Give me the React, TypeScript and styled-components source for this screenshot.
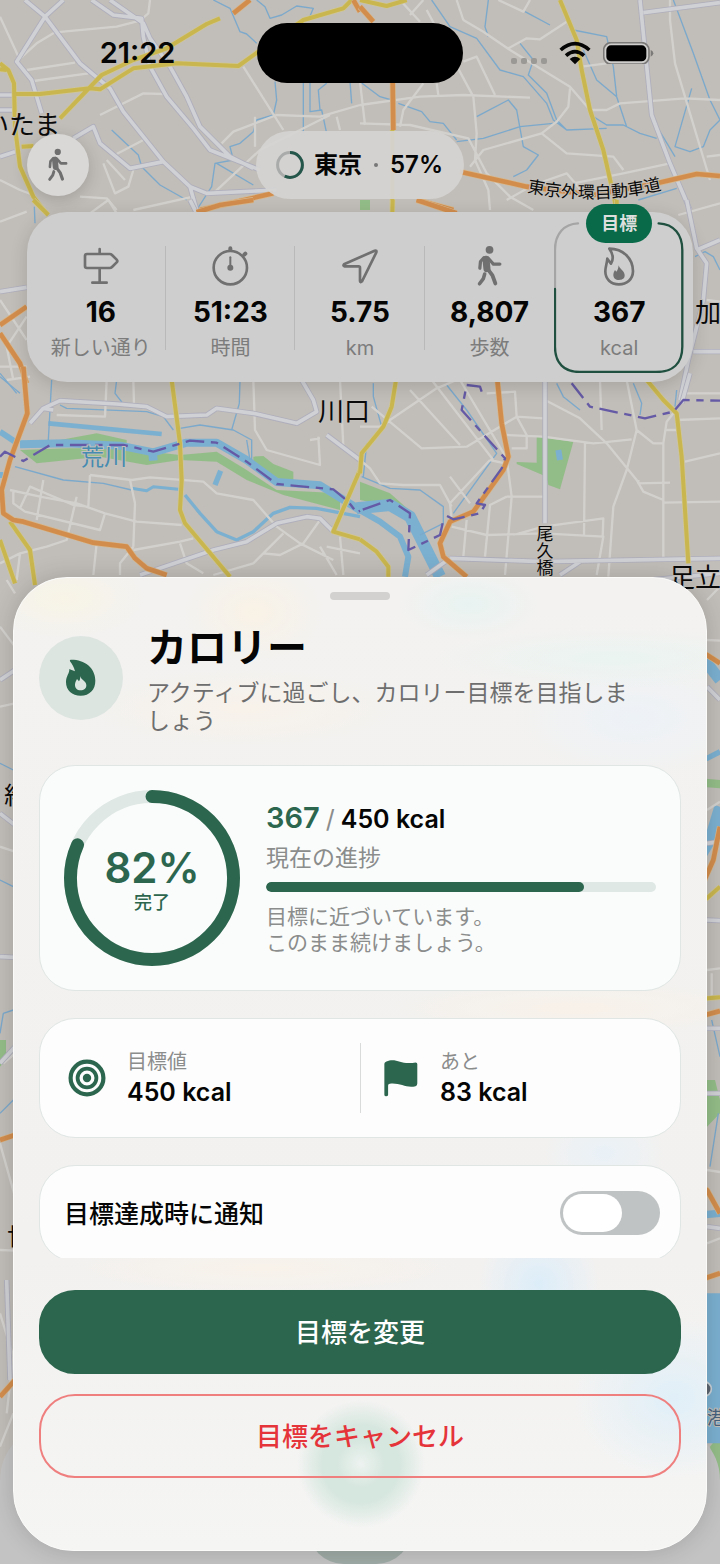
import React from 'react'
import styled, { createGlobalStyle } from 'styled-components'

const GREEN = '#2c664e'
const MUTED = '#8b8c8c'

const GlobalStyle = createGlobalStyle`
  * {
    box-sizing: border-box;
  }
  body {
    margin: 0;
    background: #c2beb9;
    font-family: Inter, 'Noto Sans CJK JP', sans-serif;
    color: #050505;
  }
  button {
    font: inherit;
    cursor: pointer;
  }
  h1, h2, p, dl, dd, dt {
    margin: 0;
  }
`

/* ---------- map ---------- */

interface Tile {
  x: number
  y: number
  parks?: string
  rivers?: [string, number][]
  streams?: string
  streets?: string
  avenues?: string
  yellow?: string
  orange?: string
  border?: string
}

const tiles: Tile[] = [
  {
    x: 0,
    y: 0,
    streams:
      'M640 0L690 25L720 95L740 102L770 130M770 0L795 20L810 55L845 45L890 18L940 25L925 60M825 245L830 300L820 345L770 360L760 395L720 430L690 440L700 480L645 490L635 560L590 630M335 390L415 465L425 500L480 555L560 600M910 245L910 400M930 245L930 335L965 330L980 400M980 250L955 270L960 330M1050 245L1055 310M650 490L760 555',
    streets:
      'M0 50L60 180M50 185L110 130L165 97L350 80L420 62L445 40L450 0M80 210L225 188M100 243L265 220M300 345L430 280L490 282M350 462L440 415M730 200L850 390M0 540L60 570L100 585M665 430L700 395L830 345L960 350L1080 315M640 580L780 450L990 345M310 490L345 580L385 560L400 510M320 480L375 540M240 590L320 595L350 630M400 630L580 590M1010 350L1020 390M765 350L765 440',
    avenues:
      'M75 0L135 50L240 190L330 265L370 335L490 485L570 560L590 630M190 0L135 50L50 185L95 240L125 340M275 0L340 45L425 55L430 110L450 200L500 290L580 385L630 450L780 510M330 0L430 70L450 115L510 200L560 290L600 380L690 470L760 505M220 415L280 380L300 430L390 505L490 485M570 560L620 580L830 570M0 470L45 455M0 285L40 285M0 330L40 330',
    yellow:
      'M0 190L25 210L42 250L45 380L60 500L100 590L130 630M0 208L20 210M45 282L120 282L270 265L300 268L400 205L530 190L715 198L775 155L910 60L1030 25L1055 0M180 355L305 225L400 180L500 145L620 72L660 55M65 440L100 438',
    orange: 'M700 40L750 0M600 630L820 580M1060 0L1080 35',
  },
  {
    x: 1080,
    y: 0,
    streams:
      'M215 0L270 80L350 115L420 210L490 230L560 310L580 360L620 390L740 385M385 0L375 80L385 110M350 350L445 300L470 330L490 440L535 465L500 510L460 530M580 370L480 380L370 415L290 425M115 310L185 335L210 365L250 370L290 420M480 130L520 180L505 225L560 280L590 360L620 390M640 90L740 110L760 200L770 290L800 380M940 0L1000 160L1050 300L1080 360M700 350L740 375L790 375L840 400L890 415M995 265L945 440L990 455L1030 440L1050 390L1080 360M495 35L570 75M670 150L710 240L770 290M835 600L950 565M870 345L945 470M0 245L60 290L95 300',
    streets:
      'M415 0L490 35L510 0M290 0L310 60L370 95L450 150L630 260L690 330L740 330L780 310L975 295L1080 300M445 145L500 115L540 118L620 65M665 200L740 190M120 0L180 65M190 0L150 45M200 30L340 290L350 400L345 480L385 570L390 630M310 185L350 170L405 285M0 315L180 290L310 285L510 293M630 265L625 320L590 365L545 400L370 450L330 500M545 400L620 460L760 470L790 510M640 550L790 520L930 490M930 0L930 60L945 190L1050 540M120 380L130 330L190 250M0 370L150 375L325 415L380 520L450 590L520 630M0 245L15 375M230 250L235 285M440 600L520 555L620 520L680 590M1040 470L1080 465',
    avenues:
      'M840 0L850 100L875 345L930 490L990 630M850 38L1080 8',
    yellow:
      'M600 0L650 120L665 210L690 330L730 450L755 560L770 630M0 0L80 18L140 0M97 390L97 630',
    orange:
      'M0 20L40 65M98 248L100 390M300 515L500 560L700 585L890 550L1010 522L1080 528M170 600L280 630',
    parks: 'M0 600L30 600L30 630L0 630Z',
  },
  {
    x: 0,
    y: 600,
    streams: 'M0 530L60 580M103 20L105 70',
    streets:
      'M0 65L80 35M0 300L80 420M0 500L80 500M80 350L20 440L40 540M20 540L90 530M270 40L325 0L350 40',
    avenues: 'M0 275L80 262M570 0L590 40',
    yellow: 'M100 0L145 45',
    orange: 'M80 320L0 375M0 400L60 490L80 550M590 37L660 15L760 0',
  },
  {
    x: 1080,
    y: 600,
    streams: 'M1005 170L1035 155L1060 170L1080 210',
    streets: 'M955 45L1080 10M1040 300L1080 305',
    avenues:
      'M980 0L1010 145L1040 190L1030 300L985 480L960 600M1010 150L1080 120M1000 455L1080 455',
    orange: 'M170 0L290 40',
    yellow: 'M98 0L97 40M770 0L770 40',
  },
  {
    x: 0,
    y: 1140,
    parks:
      'M60 210L200 205L360 205L540 225L650 215L740 270L830 330L1020 340L1020 390L850 345L740 300L650 245L540 240L440 255L300 230L110 250ZM180 180L290 160L380 180L380 195ZM760 230L790 228L820 252L880 275L880 310L820 290L760 250Z',
    rivers: [
      ['M60 193L200 190L360 197L460 217L560 188L650 188L740 240L830 306L960 316L1080 390', 24],
      ['M145 130L485 162', 14],
      ['M0 155L50 188', 18],
      ['M555 345L600 400L650 455L710 480L760 455L820 400L870 382L950 385L1080 410', 10],
      ['M395 325L440 332L460 320L535 328', 9],
      ['M645 315L662 272', 16],
      ['M0 285L10 285', 18],
      ['M458 220L460 242', 26],
    ],
    streams:
      'M155 0L145 180M350 0L345 40L370 72M720 0L718 70L695 150M45 260L190 300L310 310L395 330M540 145L600 135L700 150L755 180L755 240M180 75L200 85L440 95L490 110L520 150M0 -20L50 40M740 180L750 240',
    streets:
      'M320 0L315 110L170 105M400 0L402 72M270 285L265 380L220 375L90 320L60 385M390 300L405 370L400 500M270 285L395 300L450 292L610 305L650 340L760 360L830 440L900 490L1000 540M30 330L120 350L230 370L315 400L410 425L545 435M400 510L540 485L580 475M540 490L560 550L610 580M290 490L280 585M0 550L60 520L140 500L200 480L230 350M40 335L40 370L75 395L300 450L315 400M760 0L765 150L800 210L960 255L955 170M610 110L540 110M1020 0L1030 200M790 520L840 525L910 490L960 420M640 585L760 550L850 460M60 520L50 600M960 500L1010 585M130 300L110 420M980 500L1080 520M1020 470L1030 585M930 180L960 175M400 500L360 550L360 585',
    avenues:
      'M90 130L130 85L180 62L350 72L440 80L500 110L620 105L650 85L760 100L890 130L950 95L940 60L905 0M420 585L640 510L740 485L830 430L920 410L960 415L1000 455M980 165L1080 240M130 85L160 90',
    yellow:
      'M515 0L540 190L545 300L540 390L555 430L690 590M30 425L90 510L105 615M1080 270L1000 455L1080 478',
    orange: 'M70 -40L82 100L30 240L5 330L10 400L40 420L70 425L280 488L380 500L405 535L440 565L500 585',
    border: 'M0 230L15 215L70 243L150 195L370 195L460 215L570 182L650 188L740 245L830 312L1000 328L1045 365L1070 398L1080 392',
  },
  {
    x: 1080,
    y: 1140,
    parks:
      'M0 305L90 340L170 410L100 380L0 360ZM530 170L640 185L600 328L565 315L560 290L470 252L470 246L530 248Z',
    rivers: [
      ['M-10 385L90 375L150 410L190 490L240 590', 36],
      ['M-10 385L60 425L120 470L145 530L135 590', 18],
      ['M595 210L600 240', 18],
    ],
    streams:
      'M260 15L320 90L410 220L280 400M5 290L90 325L180 330L250 380L250 430L180 465M40 10L40 50L65 140M20 190L10 290M820 10L845 70L840 105M590 10L610 50L660 90M950 30L945 80',
    streets:
      'M150 30L300 195M215 0L400 240M35 80L185 205L320 200L470 110L550 115M60 140L230 25L290 0M0 140L60 140M380 40L465 35L470 110L500 165L500 205L455 205M440 165L550 170L700 190L815 178M555 60L660 115L740 190L830 300L850 335L910 360M675 190L672 465M830 150L800 270L760 380L745 590M800 0L830 150L880 190L910 190L910 545M975 245L1080 220M910 368L1080 365M835 300L835 310L930 308M440 350L550 350M440 235L455 350L435 585M440 350L390 375L375 530M275 440L380 465L550 460L730 470L710 585M460 465L550 440L730 415L728 470M320 420L310 530M390 240L270 370L275 420M390 240L435 250M0 240L30 265L60 310L130 315L240 315L275 380M270 290L330 370M720 0L725 150M950 120L1080 115M980 40L1080 40M915 150L950 150M910 190L920 125L940 100M300 0L440 235',
    avenues:
      'M555 0L555 430M270 535L550 545L1080 535M990 -20L965 70M200 585L270 535M600 585L660 545M870 600L1080 580',
    yellow:
      'M108 0L95 80L70 140L5 220L0 280M0 478L50 515L85 560L85 590M860 0L910 60L950 100L965 230L985 550',
    orange: 'M412 0L425 130L445 230L430 270L340 395L270 425L240 490L250 530L320 590',
    border:
      'M365 35L360 20L320 15L305 90L435 235L425 265L350 370L375 375L360 400L280 418L255 405M248 430L240 465L145 510L150 400L90 360L0 392M635 10L690 80L855 115L940 95L970 60L1080 62',
  },
  {
    x: 0,
    y: 1740,
    parks: 'M0 1380L18 1380L18 1440L0 1460ZM2100 595L2160 600L2160 625L2100 620ZM2100 1500L2145 1500L2160 1560L2160 1600L2121 1640ZM2130 2600L2160 2560L2160 2760Z',
    rivers: [
      ['M2100 225L2121 250L2160 300', 34],
      ['M2050 560L2121 535L2160 515', 16],
      ['M2060 900L2130 780L2160 680', 34],
      ['M2100 1905L2160 1900', 22],
      ['M2142 2140L2142 2590', 80],
    ],
    streams: 'M0 550L40 570M0 900L40 920M2135 1320L2160 1430M2155 1600L2130 1760M40 1290L10 1300L0 1360M0 1600L40 1560',
    streets:
      'M0 140L45 200M0 380L45 370M0 800L45 815M20 0L45 40M10 1450L45 1420M0 1690L45 1850M0 2010L45 2012M0 2200L40 2330L20 2500M2121 60L2160 20M2121 180L2160 182M2121 690L2160 665M2121 1170L2160 1165M2135 1180L2135 1250M2121 1770L2160 1776M0 2600L40 2500M2121 1990L2160 1975',
    avenues:
      'M0 300L45 270M0 700L45 735M0 1130L45 1132M0 1450L45 1400M2121 320L2160 360M2121 790L2160 785M2121 1020L2160 1022M2121 1345L2160 1345M2121 1540L2160 1540M2121 1940L2160 1945M20 2100L30 2400',
    yellow: 'M0 -120L45 10M2060 970L2121 955L2160 920M2060 1260L2160 1252',
    orange: 'M0 1680L45 1665M2060 200L2121 225L2160 250M2060 1320L2160 1293M2100 930L2140 840L2160 740M2060 1800L2121 1830L2160 1900M2100 2100L2160 2080M0 2450L45 2400',
  },
]

const MapSvg = styled.svg`
  position: absolute;
  inset: 0;
  width: 100%;
  height: 100%;
  font-family: 'Noto Sans CJK JP', sans-serif;
`

interface MapLabel {
  text: string
  x: number
  y: number
  size: number
  color?: string
  vertical?: boolean
}

const labels: MapLabel[] = [
  { text: 'いたま', x: -17, y: 134, size: 26 },
  { text: '川口', x: 318, y: 421, size: 26 },
  { text: '荒川', x: 81, y: 465, size: 23, color: '#468bb0' },
  { text: '加', x: 695, y: 322, size: 26 },
  { text: '足立', x: 669, y: 587, size: 26 },
  { text: '尾久橋', x: 545, y: 525, size: 17, vertical: true },
  { text: '紅', x: 4, y: 804, size: 24 },
  { text: '世', x: 7, y: 1245, size: 24 },
  { text: '港', x: 707, y: 1424, size: 18, color: '#47627e' },
]

const CityMap = () => (
  <MapSvg viewBox="0 0 2160 4692" preserveAspectRatio="xMidYMin slice" aria-hidden="true">
    <rect width="2160" height="4692" fill="#c1bdb8" />
    {tiles.map((t, i) => (
      <g
        key={i}
        transform={`translate(${t.x} ${t.y})`}
        fill="none"
        strokeLinejoin="round"
      >
        <path d={t.parks} fill="#93bd88" />
        {t.rivers?.map(([d, w]) => (
          <path key={d} d={d} stroke="#7bb0d0" strokeWidth={w} />
        ))}
        <path d={t.streams} stroke="#7ba9cc" strokeWidth="4" />
        <path d={t.streets} stroke="#d3d1ce" strokeWidth="7" />
        <path d={t.avenues} stroke="#aeaebc" strokeWidth="16" />
        <path d={t.avenues} stroke="#d0d1d5" strokeWidth="11" />
      </g>
    ))}
    {tiles.map((t, i) => (
      <g
        key={i}
        transform={`translate(${t.x} ${t.y})`}
        fill="none"
        strokeLinejoin="round"
      >
        <path d={t.yellow} stroke="#d0c795" strokeWidth="16" />
        <path d={t.yellow} stroke="#c9b64f" strokeWidth="12" />
        <path d={t.orange} stroke="#d6b88e" strokeWidth="18" />
        <path d={t.orange} stroke="#d28d4d" strokeWidth="14" />
        <path d={t.border} stroke="#655aa5" strokeWidth="7" strokeDasharray="56 20 22 20" />
      </g>
    ))}
    <circle cx="2112" cy="4167" r="22" fill="#5c6570" stroke="#c9d2d8" strokeWidth="5" />
    <g transform="scale(3)" fill="#0a0a0a" stroke="#c4c0bb" strokeWidth="2" paintOrder="stroke">
      {labels.map((l) => (
        <text
          key={l.text}
          x={l.x}
          y={l.y}
          fontSize={l.size}
          fill={l.color}
          writingMode={l.vertical ? 'vertical-rl' : undefined}
        >
          {l.text}
        </text>
      ))}
      <path id="ringRoad" d="M527 192Q598 206 664 189" fill="none" stroke="none" />
      <text fontSize="17">
        <textPath href="#ringRoad">東京外環自動車道</textPath>
      </text>
    </g>
  </MapSvg>
)

/* ---------- icons ---------- */

const WalkIcon = ({ height = 42 }: { height?: number }) => (
  <svg height={height} viewBox="345 134 90 130" fill="none" stroke="currentColor" strokeLinecap="round" strokeLinejoin="round">
    <circle cx="390" cy="149" r="12" fill="currentColor" stroke="none" />
    <path d="M379 178L382 207" strokeWidth="22" />
    <path d="M386 175L402 193L422 193" strokeWidth="10" />
    <path d="M373 173L362 185L360 206" strokeWidth="10" />
    <path d="M384 208L399 228L408 253" strokeWidth="12" />
    <path d="M375 224L371 238L359 254" strokeWidth="11" />
  </svg>
)

const SignIcon = () => (
  <svg height={40} viewBox="245 140 114 120" fill="none" stroke="currentColor" strokeWidth="8" strokeLinecap="round" strokeLinejoin="round">
    <path d="M298 149V162M298 208V248M276 250H319" />
    <path d="M260 164H328Q332 164 335 167L349 181Q353 185 349 189L335 203Q332 206 328 206H260Q254 206 254 200V170Q254 164 260 164Z" />
  </svg>
)

const StopwatchIcon = () => (
  <svg height={42} viewBox="632 131 116 126" fill="none" stroke="currentColor" strokeLinecap="round">
    <circle cx="690" cy="199" r="50" strokeWidth="8" />
    <path d="M690 141V146M732 160L735 157" strokeWidth="12" />
    <path d="M690 168V199" strokeWidth="6" />
    <circle cx="690" cy="199" r="9" fill="currentColor" stroke="none" />
  </svg>
)

const ArrowIcon = () => (
  <svg height={36} viewBox="0 0 114 108" fill="none" stroke="currentColor" strokeWidth="8" strokeLinejoin="round">
    <path d="M101 8L9 49Q5 54 11 55H53Q57 55 57 59V99Q58 105 63 100L106 13Q108 6 101 8Z" />
  </svg>
)

const FlameIcon = () => (
  <svg height={42} viewBox="729 131 96 126" fill="none" stroke="currentColor" strokeWidth="8" strokeLinejoin="round">
    <path d="M748 142C790 142 819 172 819 210C818 235 800 249 777 249C752 249 736 233 736 210C736 196 741 187 742 172L753 187C762 172 758 156 748 142Z" />
    <path
      d="M776 192C778 203 794 208 794 222C794 232 787 236 777 236C767 236 760 230 760 221C760 214 763 210 765 206L769 211C774 206 775 199 776 192Z"
      fill="currentColor"
      stroke="none"
    />
  </svg>
)

const FlameSolidIcon = () => (
  <svg height={40} viewBox="192 194 100 120" fill="currentColor" fillRule="evenodd">
    <path d="M212 199C209 199 209 202 211 205C216 212 222 220 225 234C220 232 215 230 208 227C209 240 198 248 198 266C198 291 216 307 242 307C269 307 286 289 286 262C286 222 252 198 212 199ZM240 248C243 260 259 262 259 276C259 286 252 291 242 291C231 291 225 284 225 274C225 267 229 262 231 257L237 264C241 259 241 253 240 248Z" />
  </svg>
)

const TargetIcon = () => (
  <svg width={38} viewBox="0 0 38 38" fill="none" stroke="currentColor">
    <circle cx="19" cy="19" r="16.4" strokeWidth="4.2" />
    <circle cx="19" cy="19" r="9.4" strokeWidth="3.8" />
    <circle cx="19" cy="19" r="4.2" fill="currentColor" stroke="none" />
  </svg>
)

const FlagIcon = () => (
  <svg width={36} viewBox="70 178 106 114" fill="currentColor">
    <path d="M74 192Q74 187 80 185C105 175 120 190 145 190Q158 190 166 188Q171 188 171 193V250Q171 256 166 258C140 266 120 247 90 251Q85 252 85 256V283Q85 288 79 288Q74 288 74 283Z" />
  </svg>
)

const WifiIcon = () => (
  <svg width={32} viewBox="0 0 96 72" fill="none" stroke="currentColor" strokeWidth="11">
    <path d="M5 27Q48 -11 91 27" />
    <path d="M21 44Q48 20 75 44" />
    <path d="M32 54Q48 41 64 54L48 70Z" fill="currentColor" stroke="none" />
  </svg>
)

const BatteryIcon = () => (
  <svg width={51} viewBox="0 0 153 68" fill="none">
    <rect x="2" y="2" width="136" height="64" rx="22" fill="#cfcecc" stroke="#7c7a78" strokeWidth="5" />
    <rect x="10" y="10" width="120" height="48" rx="14" fill="#000" />
    <path d="M143 24Q151 26 151 34Q151 42 143 44Z" fill="#7c7a78" />
  </svg>
)

/* ---------- top of the screen ---------- */

const Screen = styled.main`
  position: relative;
  display: flex;
  flex-direction: column;
  min-height: 100vh;
  overflow: hidden;
`

const TopRow = styled.div`
  position: relative;
  display: grid;
  grid-template-columns: 1fr auto 1fr;
  align-items: center;
`

const StatusBar = styled(TopRow)`
  padding: 23px 18px 0;
  justify-items: center;
`

const Clock = styled.time`
  font-size: 29px;
  font-weight: 600;
  line-height: 36px;
`

const Island = styled.div`
  width: 206px;
  height: 60px;
  border-radius: 30px;
  background: #000;
`

const StatusIcons = styled.div`
  display: flex;
  align-items: center;
  gap: 12px;
`

const SignalDots = styled.div`
  display: flex;
  gap: 4px;
  padding-top: 16px;
  span {
    width: 6px;
    height: 6px;
    border-radius: 2px;
    background: #9b9996;
  }
`

const AreaBar = styled(TopRow)`
  padding: 0 27px;
  margin-top: 48px;
`

const RoundButton = styled.button`
  display: flex;
  align-items: center;
  justify-content: center;
  width: 62px;
  height: 62px;
  border: 0;
  border-radius: 50%;
  color: #6f6f6f;
  background: #d9d8d7;
  box-shadow: 0 4px 16px rgba(0, 0, 0, 0.16);
`

const AreaPill = styled.div`
  display: flex;
  align-items: center;
  gap: 9px;
  height: 68px;
  padding: 0 21px 0 19px;
  border-radius: 34px;
  background: rgba(213, 212, 211, 0.92);
  font-size: 24px;
  font-weight: 600;
  line-height: 34px;
`

const Dot = styled.span`
  width: 4px;
  height: 4px;
  margin: 0 3px;
  border-radius: 50%;
  background: #777;
`

const StatsCard = styled.dl`
  position: relative;
  display: grid;
  grid-template-columns: repeat(5, 1fr);
  margin: 13px 27px 0;
  padding: 9px;
  border-radius: 40px;
  background: #cecece;
  box-shadow: 0 4px 18px rgba(0, 0, 0, 0.14);
`

const Stat = styled.div<{ $divided?: boolean }>`
  position: relative;
  display: flex;
  flex-direction: column;
  align-items: center;
  gap: 6px;
  height: 152px;
  padding-top: 24px;
  color: #707070;
  background: ${(p) => (p.$divided ? 'linear-gradient(#b9b9b9, #b9b9b9) right 25px / 1px 104px no-repeat' : 'none')};
`

const StatIcon = styled.div`
  display: flex;
  align-items: center;
  height: 42px;
`

const StatValue = styled.dd`
  font-size: 28px;
  font-weight: 700;
  line-height: 38px;
  color: #050505;
`

const StatLabel = styled.dt`
  order: 1;
  font-size: 20px;
  line-height: 22px;
  white-space: nowrap;
  color: #7c7c7c;
`

const GoalFrame = styled.svg`
  position: absolute;
  inset: 0;
  width: 100%;
  height: 100%;
`

const GoalBadge = styled.span`
  position: absolute;
  top: -17px;
  left: 50%;
  transform: translateX(-50%);
  padding: 0 15px;
  border-radius: 20px;
  background: #086a49;
  color: #dcdfdd;
  font-size: 18px;
  font-weight: 600;
  line-height: 39px;
  white-space: nowrap;
`

const stats = [
  { icon: <SignIcon />, value: '16', label: '新しい通り' },
  { icon: <StopwatchIcon />, value: '51:23', label: '時間' },
  { icon: <ArrowIcon />, value: '5.75', label: 'km' },
  { icon: <WalkIcon />, value: '8,807', label: '歩数' },
  { icon: <FlameIcon />, value: '367', label: 'kcal', goal: true },
]

/* ---------- dock behind the sheet ---------- */

const Dock = styled.div`
  position: absolute;
  left: 0;
  right: 0;
  bottom: 0;
  display: flex;
  align-items: flex-end;
  justify-content: center;
  height: 140px;
  border-radius: 56px 56px 0 0;
  background: #c3c3c3;
  overflow: hidden;
  span {
    width: 104px;
    height: 36px;
    border-radius: 0 0 52px 52px;
    background: #9eaaa5;
  }
`

/* ---------- goal sheet ---------- */

/* soft tints of the map and of the dock's button, seen through the glass */
const glass = [
  'radial-gradient(circle 24px at 347px 886px, rgba(240, 244, 242, 0.9), transparent)',
  'radial-gradient(circle 64px at 347px 886px, #d6e7df 60%, transparent)',
  'radial-gradient(80px 40px at 50px 20px, #f8f4e6, transparent)',
  'radial-gradient(70px 50px at 240px 34px, #f9f2e6, transparent)',
  'radial-gradient(70px 36px at 455px 26px, #e8f3f1, transparent)',
  'radial-gradient(180px 30px at 600px 80px, #eaf4f1, transparent)',
  'radial-gradient(120px 60px at 620px 140px, #edf2f7, transparent)',
  'radial-gradient(160px 40px at 230px 130px, #f8f2ea, transparent)',
  'radial-gradient(200px 30px at 560px 430px, #f8f1e9, transparent)',
  'radial-gradient(60px 40px at 590px 575px, #e9f1f7, transparent)',
  'radial-gradient(60px 60px at 525px 706px, #dcedf9, transparent)',
  'radial-gradient(220px 30px at 250px 690px, #f8f2ea, transparent)',
  'radial-gradient(100px 80px at 660px 820px, #e0eff8, transparent)',
  'linear-gradient(#f3f2f0, #f2f1f0 70%, #f5f5f4)',
].join(', ')

const Sheet = styled.section`
  position: relative;
  display: flex;
  flex-direction: column;
  margin: auto 13px 13px;
  padding: 14px 25px 72px;
  border: 1px solid #fbfbfa;
  border-radius: 54px 54px 60px 60px;
  background: ${glass};
  box-shadow: 0 0 24px rgba(0, 0, 0, 0.16);
`

const Handle = styled.div`
  align-self: center;
  width: 60px;
  height: 8px;
  border-radius: 4px;
  background: #d2d1cf;
`

const SheetHeader = styled.header`
  display: flex;
  align-items: center;
  gap: 24px;
  margin: 21px 0 30px;
`

const HeaderIcon = styled.div`
  display: flex;
  flex: none;
  align-items: center;
  justify-content: center;
  width: 84px;
  height: 84px;
  border-radius: 50%;
  color: ${GREEN};
  background: #dde5e1;
`

const Title = styled.h1`
  font-size: 40px;
  font-weight: 700;
  line-height: 54px;
`

const Subtitle = styled.p`
  max-width: 490px;
  margin-top: 4px;
  font-size: 23px;
  line-height: 28px;
  color: #6e6e6e;
`

const ScrollArea = styled.div`
  display: flex;
  flex-direction: column;
  gap: 27px;
  max-height: 493px;
  overflow: hidden;
`

const Card = styled.div<{ $tinted?: boolean }>`
  display: flex;
  flex: none;
  align-items: center;
  padding: 24px;
  border: 1px solid #dfe6e3;
  border-radius: 36px;
  background: ${(p) => (p.$tinted ? '#fafcfb' : '#fdfdfd')};
`

const RingBox = styled.div`
  position: relative;
  display: grid;
  place-content: center;
  flex: none;
  width: 176px;
  height: 176px;
  color: ${GREEN};
  text-align: center;
  svg {
    position: absolute;
    inset: 0;
  }
`

const RingValue = styled.div`
  margin-top: 6px;
  font-size: 42px;
  font-weight: 600;
  line-height: 44px;
`

const RingLabel = styled.div`
  font-size: 18px;
  font-weight: 500;
  line-height: 26px;
`

const ProgressInfo = styled.div`
  flex: 1;
  margin-left: 26px;
  color: ${MUTED};
`

const Amount = styled.h2`
  display: flex;
  align-items: baseline;
  gap: 6px;
  font-size: 25px;
  font-weight: 600;
  line-height: 34px;
  color: #050505;
  strong {
    font-size: 29px;
    font-weight: 600;
    color: ${GREEN};
  }
  span {
    font-weight: 400;
    color: ${MUTED};
  }
`

const ProgressLabel = styled.p`
  margin: 6px 0 8px;
  font-size: 23px;
  line-height: 32px;
`

const Track = styled.div`
  height: 10px;
  overflow: hidden;
  border-radius: 5px;
  background: #dfe8e4;
`

const Bar = styled.div`
  height: 100%;
  border-radius: 5px;
  background: ${GREEN};
`

const Hint = styled.p`
  margin-top: 12px;
  font-size: 21px;
  line-height: 26px;
`

const SummaryItem = styled.div`
  display: flex;
  flex: 1 1 50%;
  align-items: center;
  gap: 21px;
  height: 70px;
  padding-left: 4px;
  color: ${GREEN};
  & + & {
    padding-left: 22px;
    border-left: 1px solid #d9dada;
  }
`

const SummaryLabel = styled.p`
  font-size: 20px;
  line-height: 28px;
  color: ${MUTED};
`

const SummaryValue = styled.p`
  font-size: 25px;
  font-weight: 600;
  line-height: 32px;
  color: #050505;
`

const NotifyLabel = styled.label`
  flex: 1;
  font-size: 25px;
  font-weight: 500;
  line-height: 36px;
`

const Toggle = styled.input`
  appearance: none;
  display: flex;
  align-items: center;
  width: 100px;
  height: 44px;
  margin: 1px -4px 2px 0;
  padding: 3px;
  border-radius: 22px;
  background: #c0c3c4;
  cursor: pointer;
  &::before {
    content: '';
    width: 59px;
    height: 38px;
    border-radius: 19px;
    background: #fff;
  }
  &:checked {
    justify-content: flex-end;
    background: ${GREEN};
  }
`

const ActionButton = styled.button<{ $danger?: boolean }>`
  height: 84px;
  padding: 0 0 4px;
  border: 2px solid ${(p) => (p.$danger ? '#ef7f7f' : GREEN)};
  border-radius: 36px;
  background: ${(p) => (p.$danger ? 'transparent' : GREEN)};
  color: ${(p) => (p.$danger ? '#e5343a' : '#fff')};
  font-size: 26px;
  font-weight: 500;
`

const Actions = styled.div`
  display: grid;
  gap: 20px;
  margin-top: 32px;
`

const current = 367
const goal = 450
const ratio = current / goal

const ProgressRing = () => {
  const length = 2 * Math.PI * 82
  return (
    <RingBox>
      <svg viewBox="0 0 177 177" fill="none" strokeWidth="13">
        <circle cx="88.5" cy="88.5" r="82" stroke="#dfe8e4" />
        <circle
          cx="88.5"
          cy="88.5"
          r="82"
          stroke={GREEN}
          strokeLinecap="round"
          strokeDasharray={`${length * ratio} ${length}`}
          transform="rotate(-90 88.5 88.5)"
        />
      </svg>
      <RingValue>{Math.round(ratio * 100)}%</RingValue>
      <RingLabel>完了</RingLabel>
    </RingBox>
  )
}

const App = () => {
  return (
    <Screen>
      <GlobalStyle />
      <CityMap />
      <Dock>
        <span />
      </Dock>

      <StatusBar>
        <Clock>21:22</Clock>
        <Island />
        <StatusIcons>
          <SignalDots>
            <span />
            <span />
            <span />
            <span />
          </SignalDots>
          <WifiIcon />
          <BatteryIcon />
        </StatusIcons>
      </StatusBar>

      <AreaBar>
        <RoundButton aria-label="ウォーキング">
          <WalkIcon height={34} />
        </RoundButton>
        <AreaPill>
          <svg width={30} viewBox="0 0 30 30" fill="none" strokeWidth="3">
            <circle cx="15" cy="15" r="12.4" stroke="#a9aaaa" />
            <circle cx="15" cy="15" r="12.4" stroke="#24574a" pathLength="100" strokeDasharray="57 100" transform="rotate(-90 15 15)" />
          </svg>
          東京
          <Dot />
          <span>57%</span>
        </AreaPill>
      </AreaBar>

      <StatsCard>
        {stats.map((s, i) => (
          <Stat key={s.label} $divided={i < 3}>
            {s.goal && (
              <GoalFrame viewBox="585 63 387 456" fill="none" strokeWidth="7" strokeLinecap="round">
                <path d="M587 265V150C587 100 615 72 656 70" stroke="#a5a5a5" />
                <path d="M898 70C945 72 969 105 969 150V440C969 490 940 516 890 516H662C615 516 587 490 587 440V267" stroke="#1f5040" />
              </GoalFrame>
            )}
            {s.goal && <GoalBadge>目標</GoalBadge>}
            <StatIcon>{s.icon}</StatIcon>
            <StatLabel>{s.label}</StatLabel>
            <StatValue>{s.value}</StatValue>
          </Stat>
        ))}
      </StatsCard>

      <Sheet>
        <Handle />
        <SheetHeader>
          <HeaderIcon>
            <FlameSolidIcon />
          </HeaderIcon>
          <div>
            <Title>カロリー</Title>
            <Subtitle>アクティブに過ごし、カロリー目標を目指しましょう</Subtitle>
          </div>
        </SheetHeader>

        <ScrollArea>
          <Card $tinted>
            <ProgressRing />
            <ProgressInfo>
              <Amount>
                <strong>{current}</strong>
                <span>/</span>
                {goal} kcal
              </Amount>
              <ProgressLabel>現在の進捗</ProgressLabel>
              <Track>
                <Bar style={{ width: `${ratio * 100}%` }} />
              </Track>
              <Hint>
                目標に近づいています。
                <br />
                このまま続けましょう。
              </Hint>
            </ProgressInfo>
          </Card>

          <Card>
            <SummaryItem>
              <TargetIcon />
              <div>
                <SummaryLabel>目標値</SummaryLabel>
                <SummaryValue>{goal} kcal</SummaryValue>
              </div>
            </SummaryItem>
            <SummaryItem>
              <FlagIcon />
              <div>
                <SummaryLabel>あと</SummaryLabel>
                <SummaryValue>{goal - current} kcal</SummaryValue>
              </div>
            </SummaryItem>
          </Card>

          <Card>
            <NotifyLabel htmlFor="notify">目標達成時に通知</NotifyLabel>
            <Toggle id="notify" type="checkbox" role="switch" />
          </Card>
        </ScrollArea>

        <Actions>
          <ActionButton>目標を変更</ActionButton>
          <ActionButton $danger>目標をキャンセル</ActionButton>
        </Actions>
      </Sheet>
    </Screen>
  )
}

export default App
